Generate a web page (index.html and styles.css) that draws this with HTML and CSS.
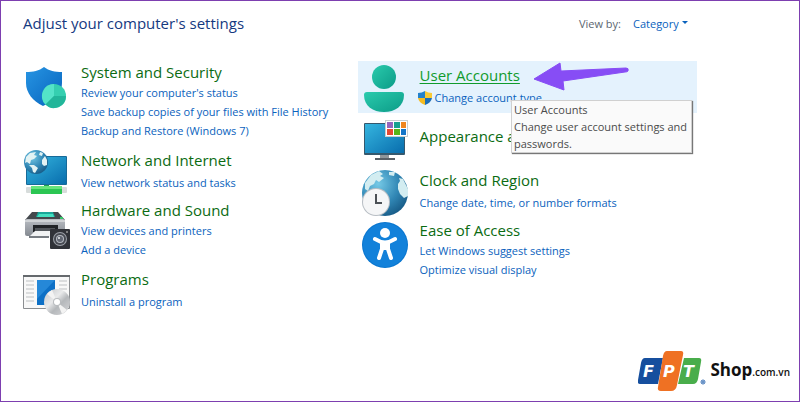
FILE: index.html
```
<!DOCTYPE html>
<html lang="en">
<head>
<meta charset="utf-8">
<meta name="viewport" content="width=device-width, initial-scale=1">
<title>Control Panel</title>
<link rel="stylesheet" href="styles.css">
</head>
<body>
<div class="page">
  <header class="topbar">
    <h1>Adjust your computer's settings</h1>
    <div class="view">
      <label for="view-by">View by:</label>
      <select id="view-by"><option>Category</option></select>
      <svg class="caret" viewBox="0 0 6 4" aria-hidden="true"><path d="M0 0h6L3 3z" fill="#0a62bd"/></svg>
    </div>
  </header>

  <main class="columns">
    <div class="column">
      <section class="category">
        <svg class="icon" viewBox="0 0 48 50" aria-hidden="true">
          <defs>
            <linearGradient id="shield" x1="0" y1="0" x2="1" y2="1"><stop offset="0" stop-color="#2795e3"/><stop offset="1" stop-color="#0763bd"/></linearGradient>
          </defs>
          <path d="M21 5C16 9 10 10 3 10V21C3 31 10 39 20 44C33 38 39 31 39 21V10C32 10 26 9 21 5Z" fill="url(#shield)"/>
          <circle cx="31" cy="34" r="12" fill="#35cfb0"/>
          <path d="M31 34V22A12 12 0 0 0 22.500 42.500Z" fill="#54e3c8"/>
          <path d="M31 34H43A12 12 0 0 1 22.500 42.500Z" fill="#22b69a"/>
        </svg>
        <div class="text">
          <h2><a href="#">System and Security</a></h2>
          <a href="#">Review your computer's status</a>
          <a href="#">Save backup copies of your files with File History</a>
          <a href="#">Backup and Restore (Windows 7)</a>
        </div>
      </section>

      <section class="category single">
        <svg class="icon" viewBox="0 0 48 50" aria-hidden="true">
          <defs>
            <linearGradient id="screen" x1="0" y1="0" x2="1" y2="1"><stop offset="0" stop-color="#35b5df"/><stop offset="1" stop-color="#086dad"/></linearGradient>
            <radialGradient id="globe" cx=".35" cy=".3" r=".75"><stop offset="0" stop-color="#75c9e6"/><stop offset=".6" stop-color="#3187b5"/><stop offset="1" stop-color="#185c88"/></radialGradient>
          </defs>
          <rect x="3" y="6" width="41" height="29" rx="1" fill="#176a99"/>
          <rect x="4" y="7" width="39" height="27" fill="url(#screen)"/>
          <path d="M21 35h5v3h-5z" fill="#20a350"/>
          <rect x="3" y="37" width="41" height="6" rx="1" fill="#d7dcdb"/>
          <path d="M8 36h31v8H8z" fill="#2bc653"/><path d="M8 36h31v3H8z" fill="#67e47d"/>
          <circle cx="13" cy="12" r="12" fill="url(#globe)"/>
          <path d="M3 7l4-4 6-1-2 3 3 1-3 3-3 1-1 4-3-2-2 1M17 2l3 1-1 3-3-1zM6 15l5 0 4 3-3 5-2-1-1-4zM19 10l3-4 2 4 0 5-3 1-2-2z" fill="#e3f3f4"/>
        </svg>
        <div class="text">
          <h2><a href="#">Network and Internet</a></h2>
          <a href="#">View network status and tasks</a>
        </div>
      </section>

      <section class="category">
        <svg class="icon" viewBox="0 0 48 50" aria-hidden="true">
          <defs>
            <linearGradient id="printer" x1="0" y1="0" x2="0" y2="1"><stop offset="0" stop-color="#b9bdc3"/><stop offset="1" stop-color="#858a91"/></linearGradient>
          </defs>
          <path d="M9 12H35L42 20H2Z" fill="#44484d"/>
          <path d="M15 12h15l2 5H13z" fill="#1aa699"/><path d="M16 14h14l1 3H14z" fill="#43dfc1"/>
          <rect x="2" y="19" width="40" height="17" rx="2" fill="url(#printer)"/>
          <path d="M2 20h40v2H2z" fill="#d0d3d6"/><path d="M37 17h3v2h-3z" fill="#35c66b"/>
          <path d="M10 25h25v7H10z" fill="#202327"/>
          <path d="M12 28h20v4H12z" fill="#53575c"/><path d="M12 31h19v6H6z" fill="#f1f2f3"/><path d="M6 36h20v2H6z" fill="#777c82"/>
          <rect x="27" y="29" width="20" height="20" rx="1" fill="#303238"/>
          <circle cx="37" cy="39" r="7" fill="#9ca0a8"/><circle cx="37" cy="39" r="6" fill="#464951"/><circle cx="37" cy="39" r="4" fill="#b5b9c1"/><circle cx="37" cy="39" r="3" fill="#626772"/><circle cx="36" cy="38" r="1" fill="#eceef1"/><circle cx="44" cy="32" r="1" fill="#999"/>
        </svg>
        <div class="text">
          <h2><a href="#">Hardware and Sound</a></h2>
          <a href="#">View devices and printers</a>
          <a href="#">Add a device</a>
        </div>
      </section>

      <section class="category single">
        <svg class="icon" viewBox="0 0 48 50" aria-hidden="true">
          <defs>
            <linearGradient id="disc" x1="0" y1="0" x2="1" y2="1"><stop offset="0" stop-color="#c2c4c7"/><stop offset=".4" stop-color="#e9eaeb"/><stop offset=".6" stop-color="#b5b8bb"/><stop offset="1" stop-color="#d7d8da"/></linearGradient>
          </defs>
          <rect x="0" y="6" width="47" height="34" rx="1" fill="#8b8e91"/>
          <path d="M1 8h45v31H1z" fill="#f8f8f8"/><path d="M0 6h47v2H0z" fill="#65696d"/>
          <path d="M3 12h8M3 16h8M3 20h8M3 24h8M3 28h8M3 32h8M36 12h8M36 16h8M36 20h8" stroke="#bdc0c2"/>
          <path d="M14 11h18v25H14z" fill="#0d70c6"/><path d="M14 11h18L14 30z" fill="#2588d8"/>
          <circle cx="34" cy="33" r="13" fill="url(#disc)"/>
          <path d="M34 33L24 25A13 13 0 0 1 29 21ZM34 33L44 41A13 13 0 0 1 39 45Z" fill="#f3f3f3"/>
          <circle cx="34" cy="33" r="4" fill="#b9bcbf"/><circle cx="34" cy="33" r="3" fill="#fff"/>
        </svg>
        <div class="text">
          <h2><a href="#">Programs</a></h2>
          <a href="#">Uninstall a program</a>
        </div>
      </section>
    </div>

    <div class="column">
      <section class="category single selected">
        <svg class="icon" viewBox="0 0 48 50" aria-hidden="true">
          <defs>
            <linearGradient id="person" x1="0" y1="0" x2="1" y2="1"><stop offset="0" stop-color="#2acbad"/><stop offset="1" stop-color="#0c9b87"/></linearGradient>
          </defs>
          <circle cx="22" cy="14" r="12" fill="url(#person)"/>
          <path d="M5 29H39Q42 29 42 32C42 43 33 49 22 49S2 43 2 32Q2 29 5 29Z" fill="url(#person)"/>
        </svg>
        <div class="text">
          <h2><a href="#" aria-describedby="tip">User Accounts</a></h2>
          <a href="#" class="guarded">
            <svg class="uac" viewBox="0 0 14 14" aria-hidden="true">
              <path d="M7 0Q4 2 0 2V7H7Z" fill="#2381cb"/><path d="M7 0Q10 2 14 2V7H7Z" fill="#f9ca35"/>
              <path d="M0 7Q1 12 7 14V7Z" fill="#f5bb20"/><path d="M14 7Q13 12 7 14V7Z" fill="#1c6eb8"/>
            </svg>
            <span>Change account type</span>
          </a>
        </div>
        <svg class="arrow" viewBox="0 0 96 30" aria-hidden="true"><path d="M1 17L27 1L28 9L93 6Q96 6 95 9Q94 10 92 10L30 19L31 28Z" fill="#874df5" stroke="#874df5" stroke-linejoin="round"/></svg>
        <div class="tooltip" id="tip" role="tooltip">User Accounts<br>Change user account settings and passwords.</div>
      </section>

      <section class="category appearance">
        <svg class="icon" viewBox="0 0 48 50" aria-hidden="true">
          <path d="M18 36h9v4h-9z" fill="#8f969b"/><path d="M13 39h20v2H13z" fill="#596067"/>
          <rect x="2" y="4" width="41" height="32" rx="1" fill="#35586d"/><path d="M3 5h39v29H3z" fill="url(#screen)"/>
          <path d="M23 1h23v17H23z" fill="#c8ced1"/><path d="M24 2h21v15H24z" fill="#fff"/>
          <path d="M25 3h6v6h-6z" fill="#9566bd"/><path d="M32 3h6v6h-6z" fill="#18a18f"/><path d="M39 3h5v6h-5z" fill="#ef8620"/>
          <path d="M25 10h6v6h-6z" fill="#e64931"/><path d="M32 10h6v6h-6z" fill="#58b517"/><path d="M39 10h5v6h-5z" fill="#1475c8"/>
        </svg>
        <div class="text">
          <h2><a href="#">Appearance and Personalization</a></h2>
        </div>
      </section>

      <section class="category single clock">
        <svg class="icon" viewBox="0 0 48 50" aria-hidden="true">
          <circle cx="23" cy="24" r="23" fill="url(#globe)"/>
          <path d="M3 14L9 6L17 2L21 5L18 7L22 9L17 13L14 11L12 15L8 17L6 22L3 20ZM27 3L33 3L32 7L27 6ZM36 15L38 12L37 9L41 10L46 20V27L42 29L38 25L36 20Z" fill="#d3edf1"/>
          <circle cx="14" cy="33" r="14" fill="#b8bec4"/><circle cx="14" cy="33" r="13" fill="#f5f6f7"/>
          <path d="M14 25v9h6" fill="none" stroke="#4c5156" stroke-width="2"/>
        </svg>
        <div class="text">
          <h2><a href="#">Clock and Region</a></h2>
          <a href="#">Change date, time, or number formats</a>
        </div>
      </section>

      <section class="category">
        <svg class="icon" viewBox="0 0 48 50" aria-hidden="true">
          <circle cx="23" cy="25" r="23" fill="#0875cf"/><circle cx="23" cy="25" r="22" fill="#1281da"/>
          <circle cx="23" cy="13" r="5" fill="#fff"/>
          <path d="M13 19L19 22Q23 23 27 22L33 19M20 23V29L17 38M26 23V29L29 38" fill="none" stroke="#fff" stroke-width="4" stroke-linecap="round" stroke-linejoin="round"/>
          <path d="M18 21h10v9H18z" fill="#fff"/>
        </svg>
        <div class="text">
          <h2><a href="#">Ease of Access</a></h2>
          <a href="#">Let Windows suggest settings</a>
          <a href="#">Optimize visual display</a>
        </div>
      </section>
    </div>
  </main>

  <footer class="brand">
    <svg class="tiles" viewBox="0 0 68 42" role="img" aria-label="FPT">
      <path d="M7 8H25L20 34H2Q-1 34 0 30L3 13Q4 8 7 8Z" fill="#164f9e"/>
      <path d="M46 8H61Q64 8 63 12L60 29Q59 34 55 34H40Z" fill="#49ad4b"/>
      <path d="M29 1H43Q46 1 45 5L39 35Q38 41 33 41H23Q19 41 20 37L25 6Q26 1 29 1Z" fill="#ef7123"/>
      <g class="tile-letters"><text x="5" y="27">F</text><text x="25" y="27">P</text><text x="45" y="27">T</text></g>
      <circle cx="65" cy="32" r="2" fill="none" stroke="#3970b5"/><circle cx="65" cy="32" r="1" fill="#3970b5"/>
    </svg>
    <span class="shop">Shop<small>.com.vn</small></span>
  </footer>
</div>
</body>
</html>
```
FILE: styles.css
```
* { box-sizing: border-box; }

body {
  margin: 0;
  background: #fff;
  font-family: "Open Sans", "Noto Sans", sans-serif;
  font-size: 11px;
  line-height: 19px;
}

.page {
  display: flex;
  flex-direction: column;
  min-height: 100vh;
  padding: 12px 9px 9px 22px;
  border: 1px solid #7d3fb0;
}

a { color: #0a62bd; text-decoration: none; }
a:hover { text-decoration: underline; }
h1, h2 { margin: 0; font-weight: 400; }
h1 { color: #15397f; font-size: 15px; line-height: 20px; }
h2 { font-size: 15px; line-height: 21px; }
h2 a { color: #0b6b12; }

.topbar {
  display: flex;
  justify-content: space-between;
  align-items: center;
  padding-right: 102px;
}

.view {
  display: flex;
  align-items: center;
  color: #5c6670;
}

.view select {
  appearance: none;
  margin: 0 3px 0 12px;
  padding: 0;
  border: 0;
  background: none;
  color: #0a62bd;
  font: inherit;
}

.caret { width: 6px; height: 4px; }

.columns {
  display: grid;
  grid-template-columns: 335fr 433fr;
  padding-top: 29px;
}

.category {
  position: relative;
  display: flex;
  align-items: flex-start;
  gap: 10px;
}

.icon { flex: none; width: 48px; height: 50px; }

.text {
  display: flex;
  flex-direction: column;
  align-items: flex-start;
  padding-bottom: 10px;
  white-space: nowrap;
}

.single .text { gap: 2px; padding-bottom: 8px; }

.column + .column .category { margin-right: 93px; padding-left: 4px; }

.column + .column .selected {
  z-index: 1;
  margin-top: -1px;
  padding-top: 2px;
  background: #e4f2fd;
}

.selected .text { padding-top: 2px; padding-bottom: 6px; }
.selected h2 a { color: #109b2c; text-decoration: underline; text-underline-offset: 2px; }

.guarded { display: flex; align-items: center; gap: 3px; margin-left: -2px; }
.uac { width: 14px; height: 14px; }

.arrow {
  position: absolute;
  top: 1px;
  right: 68px;
  width: 96px;
  height: 30px;
}

.tooltip {
  position: absolute;
  top: 39px;
  right: 5px;
  width: 181px;
  padding: 0 2px;
  border: 1px solid #d0d0d0;
  background: #fafafa;
  box-shadow: 1px 1px 1px #777;
  color: #4b4b4b;
  line-height: 17px;
}

.appearance { margin-top: 6px; }
.appearance .text { padding-top: 7px; }
.clock .text { padding-top: 1px; }

.brand {
  display: flex;
  align-items: center;
  gap: 4px;
  margin-top: auto;
  margin-left: auto;
}

.tiles { width: 68px; height: 42px; }

.tile-letters {
  fill: #fff;
  font-family: "DejaVu Sans", sans-serif;
  font-size: 16px;
  font-style: italic;
  font-weight: 700;
}

.shop {
  color: #111;
  font-size: 17px;
  font-weight: 700;
}

.shop small { font-size: 10px; font-weight: 600; }
```
